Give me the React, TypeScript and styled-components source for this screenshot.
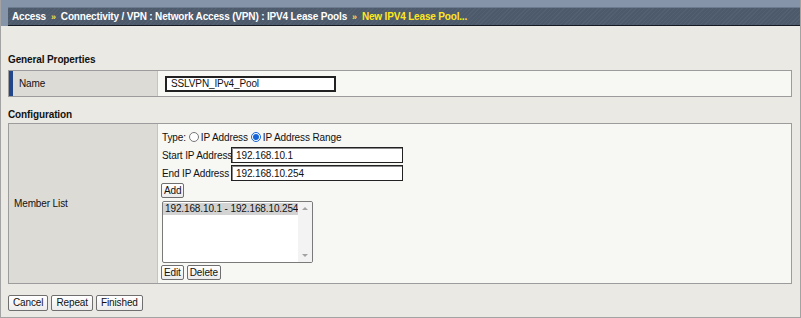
import * as React from "react";
import styled, { createGlobalStyle } from "styled-components";

const GlobalStyle = createGlobalStyle`
  html, body {
    margin: 0;
    padding: 0;
    background: #ebe9e4;
  }
  * {
    box-sizing: border-box;
  }
`;

const Page = styled.div`
  width: 801px;
  height: 318px;
  background: #ebe9e4;
  border: 1px solid #a3a3a3;
  border-top: none;
  font-family: "Liberation Sans", Arial, sans-serif;
  font-size: 10px;
  letter-spacing: -0.12px;
  color: #111;
  display: flex;
  flex-direction: column;
  overflow: hidden;
`;

const TopBand = styled.div`
  background: #8694aa;
  padding: 7px 0 0 7px;
`;

const Crumbs = styled.div`
  height: 19px;
  display: flex;
  align-items: center;
  gap: 5px;
  padding-left: 4px;
  border-top: 1px solid #6c7b90;
  border-bottom: 1px solid #141922;
  background-color: #4c5a6b;
  background-image: repeating-linear-gradient(
    135deg,
    rgba(255, 255, 255, 0.04) 0 1px,
    transparent 1px 3px
  );
  font-weight: bold;
  font-size: 10px;
  letter-spacing: -0.17px;
  white-space: nowrap;
`;

const Crumb = styled.span<{ $current?: boolean }>`
  color: ${(p) => (p.$current ? "#ffe81a" : "#ffffff")};
`;

const Sep = styled.span`
  color: #f3dc52;
  font-size: 9px;
`;

const Content = styled.div`
  display: flex;
  flex-direction: column;
  padding: 27px 8px 0 7px;
`;

const SectionTitle = styled.div<{ $gap?: number }>`
  font-weight: bold;
  line-height: 14px;
  margin-bottom: ${(p) => p.$gap ?? 3}px;
`;

const Table = styled.div<{ $height: number }>`
  display: grid;
  grid-template-columns: 149px 1fr;
  height: ${(p) => p.$height}px;
  border: 1px solid #9c9c9c;
  margin-bottom: 11px;
`;

const LabelCell = styled.div<{ $marked?: boolean }>`
  display: flex;
  align-items: center;
  padding-left: ${(p) => (p.$marked ? "6px" : "5px")};
  background: #dddbd6;
  border-left: ${(p) => (p.$marked ? "4px solid #23458a" : "none")};
  border-right: 1px solid #c4c4c0;
`;

const ValueCell = styled.div`
  background: #f7f7f3;
  display: flex;
  flex-direction: column;
  padding: 5px 4px 3px 3px;
`;

const NameCell = styled(ValueCell)`
  justify-content: center;
  padding: 0 0 0 7px;
`;

const TextInput = styled.div<{ $width: number; $thick?: boolean }>`
  width: ${(p) => p.$width}px;
  height: 16px;
  flex-shrink: 0;
  background: #fff;
  border: ${(p) => (p.$thick ? "2px" : "1px")} solid #222;
  box-shadow: ${(p) => (p.$thick ? "none" : "inset 1px 1px 0 #8a8a8a")};
  display: flex;
  align-items: center;
  padding-left: 4px;
  font-size: 10px;
  white-space: nowrap;
`;

const TypeRow = styled.div`
  display: flex;
  align-items: center;
  height: 14px;
  margin: 1px 0 3px 1px;
  white-space: nowrap;
`;

const Radio = styled.input`
  width: 10px;
  height: 10px;
  margin: 0 2px 0 3px;
  accent-color: #1565d8;
`;

const FieldRow = styled.div`
  display: flex;
  align-items: center;
  height: 16px;
  margin-bottom: 2px;
  padding-left: 1px;
`;

const FieldLabel = styled.span`
  width: 69px;
  flex-shrink: 0;
  white-space: nowrap;
`;

const SmallButton = styled.button`
  font-family: "Liberation Sans", Arial, sans-serif;
  font-size: 10px;
  letter-spacing: -0.12px;
  color: #111;
  height: 15px;
  padding: 0 2px;
  border: 1px solid #6f6f6f;
  border-radius: 2px;
  background: linear-gradient(#ffffff, #ececec);
  line-height: 12px;
`;

const ButtonRow = styled.div`
  display: flex;
  gap: 3px;
`;

const ListBox = styled.div`
  width: 151px;
  height: 62px;
  margin: 3px 0 2px 1px;
  background: #fff;
  border: 1px solid #7a7a7a;
  border-radius: 2px;
  display: flex;
  overflow: hidden;
`;

const ListItems = styled.div`
  flex: 1;
  padding-top: 1px;
`;

const ListItem = styled.div<{ $selected?: boolean }>`
  height: 12px;
  line-height: 12px;
  padding-left: 2px;
  background: ${(p) => (p.$selected ? "#d3d3d3" : "transparent")};
  white-space: nowrap;
`;

const Scrollbar = styled.div`
  width: 14px;
  background: #f3f3f3;
  display: flex;
  flex-direction: column;
  justify-content: space-between;
  align-items: center;
  padding: 5px 0 5px 0;
`;

const Arrow = styled.div<{ $down?: boolean }>`
  width: 0;
  height: 0;
  border-left: 3px solid transparent;
  border-right: 3px solid transparent;
  ${(p) =>
    p.$down ? "border-top: 3px solid #a3a3a3;" : "border-bottom: 3px solid #a3a3a3;"}
`;

const Footer = styled.div`
  display: flex;
  gap: 3px;
  padding-left: 0;
`;

const FormButton = styled(SmallButton)`
  height: 16px;
  padding: 0 4px;
`;

export default function App() {
  return (
    <>
      <GlobalStyle />
      <Page>
        <TopBand>
          <Crumbs>
            <Crumb>Access</Crumb>
            <Sep>»</Sep>
            <Crumb>Connectivity / VPN : Network Access (VPN) : IPV4 Lease Pools</Crumb>
            <Sep>»</Sep>
            <Crumb $current>New IPV4 Lease Pool...</Crumb>
          </Crumbs>
        </TopBand>
        <Content>
          <SectionTitle>General Properties</SectionTitle>
          <Table $height={27}>
            <LabelCell $marked>Name</LabelCell>
            <NameCell>
              <TextInput $width={171} $thick>
                SSLVPN_IPv4_Pool
              </TextInput>
            </NameCell>
          </Table>
          <SectionTitle $gap={1}>Configuration</SectionTitle>
          <Table $height={161}>
            <LabelCell>Member List</LabelCell>
            <ValueCell>
              <TypeRow>
                Type:
                <Radio type="radio" name="t" readOnly />
                IP Address
                <Radio type="radio" name="t" defaultChecked />
                IP Address Range
              </TypeRow>
              <FieldRow>
                <FieldLabel>Start IP Address</FieldLabel>
                <TextInput $width={172}>192.168.10.1</TextInput>
              </FieldRow>
              <FieldRow>
                <FieldLabel>End IP Address</FieldLabel>
                <TextInput $width={172}>192.168.10.254</TextInput>
              </FieldRow>
              <ButtonRow>
                <SmallButton>Add</SmallButton>
              </ButtonRow>
              <ListBox>
                <ListItems>
                  <ListItem $selected>192.168.10.1 - 192.168.10.254</ListItem>
                </ListItems>
                <Scrollbar>
                  <Arrow />
                  <Arrow $down />
                </Scrollbar>
              </ListBox>
              <ButtonRow>
                <SmallButton>Edit</SmallButton>
                <SmallButton>Delete</SmallButton>
              </ButtonRow>
            </ValueCell>
          </Table>
          <Footer>
            <FormButton>Cancel</FormButton>
            <FormButton>Repeat</FormButton>
            <FormButton>Finished</FormButton>
          </Footer>
        </Content>
      </Page>
    </>
  );
}
